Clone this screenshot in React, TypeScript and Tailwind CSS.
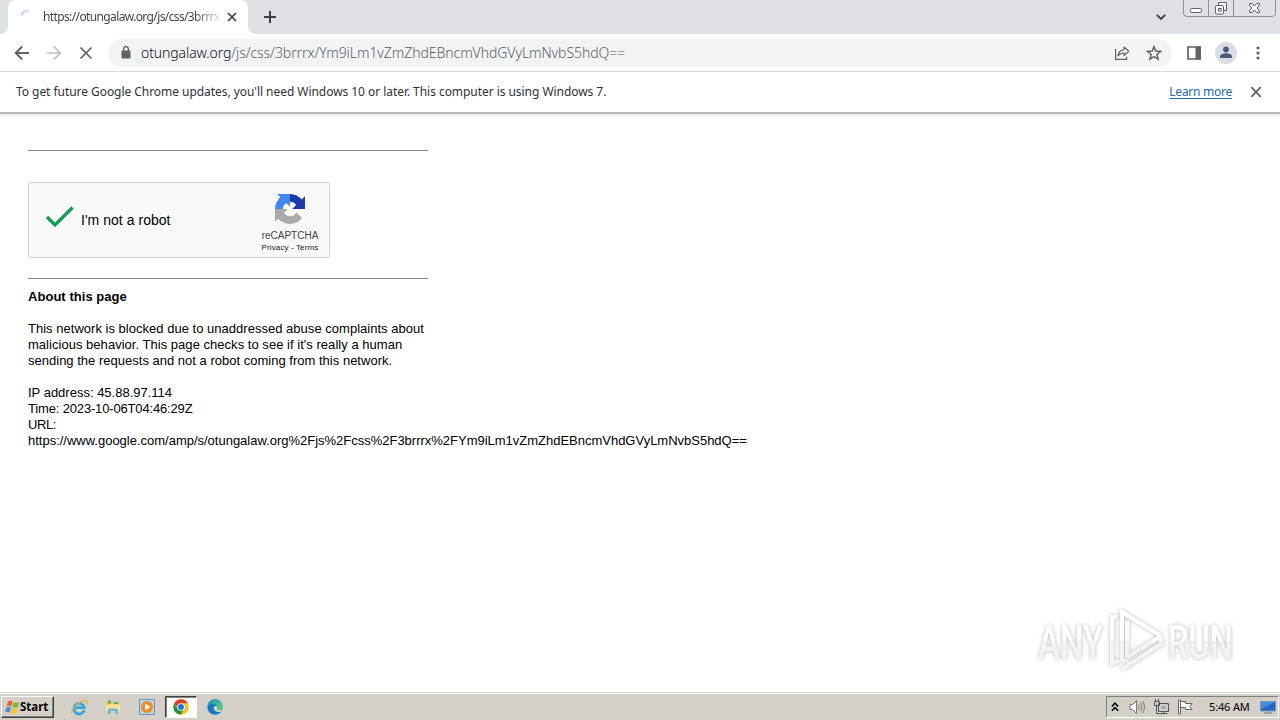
import type { ReactNode } from "react";

const TAHOMA = "font-['Noto_Sans','DejaVu_Sans',sans-serif]";
const ARIAL = "font-['Liberation_Sans',Arial,sans-serif]";

function Stroke({ size, d, className = "", width = 2, box = 24 }: { size: number; d: string; className?: string; width?: number; box?: number }) {
  return (
    <svg width={size} height={size} viewBox={`0 0 ${box} ${box}`} fill="none" stroke="currentColor" strokeWidth={width} className={`block shrink-0 ${className}`}>
      <path d={d} />
    </svg>
  );
}

function TabStrip() {
  return (
    <div className="flex h-[34px] items-start bg-[#dee1e6]">
      <div className="flex h-[34px] w-2 items-end bg-white">
        <div className="h-[34px] w-2 rounded-br-lg bg-[#dee1e6]" />
      </div>
      <div className="flex h-[34px] w-60 items-center rounded-t-lg bg-white pl-3">
        <svg width="16" height="16" viewBox="0 0 16 16" fill="none" className="shrink-0">
          <path d="M1.500 6.500C2.300 3.500 4.700 1.600 8.500 1.800" stroke="#c9d5f8" strokeWidth="2" />
        </svg>
        <div className="ml-[7px] w-[177px] whitespace-nowrap bg-gradient-to-r from-[#3c4043] from-85% to-[#e8e8e8] bg-clip-text text-[12px] leading-4 tracking-[-0.620px] text-transparent">
          https://otungalaw.org/js/css/3brrrx/
        </div>
        <Stroke size={10} box={10} d="M1 1l8 8M9 1L1 9" width={1.700} className="ml-[7px] text-[#3c4043]" />
      </div>
      <div className="h-[34px] w-2 bg-white">
        <div className="h-[34px] w-2 rounded-bl-lg bg-[#dee1e6]" />
      </div>
      <Stroke size={12} box={12} d="M6 0v12M0 6h12" width={2} className="mt-[11px] ml-2 text-[#3c4043]" />
      <Stroke size={10} box={10} d="M0.8 2.8L5 7l4.200-4.200" width={1.9} className="mt-3 ml-auto text-[#3c4043]" />
      <svg width="94" height="18" viewBox="0 0 94 18" fill="none" className="mr-[3px] ml-[17px] block">
        <path d="M.5 0v13q0 3.500 3.500 3.500h85q3.500 0 3.500-3.500V0M25.500 0v16M50.500 0v16" stroke="#8d9198" />
        <rect x="7.500" y="8.500" width="11" height="4" rx="1" fill="#fafafa" stroke="#5c6068" />
        <path d="M35.500 5V2.500h8v8h-2.500" stroke="#5c6068" fill="#fafafa" />
        <rect x="32.500" y="5.500" width="8" height="8.500" rx="1" stroke="#5c6068" fill="#fafafa" />
        <rect x="35.500" y="8.500" width="2.500" height="2.500" stroke="#5c6068" />
        <path d="M66.500 3.500h3l2 2.500 2-2.500h3v2L74 8l2.500 2.500v2h-3l-2-2.500-2 2.500h-3v-2L69 8l-2.500-2.500z" fill="#fafafa" stroke="#5c6068" />
      </svg>
    </div>
  );
}

function Toolbar() {
  return (
    <div className="flex h-[38px] items-center border-b border-[#d5d7da] bg-white pl-[14px] text-[#5f6368]">
      <Stroke size={16} box={16} d="M15 8H2M8.200 1.500L1.700 8l6.500 6.500" width={1.9} />
      <Stroke size={16} box={16} d="M1 8h13M7.800 1.500L14.300 8l-6.500 6.500" width={1.7} className="ml-4 text-[#bbbdc0]" />
      <Stroke size={14} box={14} d="M1.500 1.500l11 11M12.500 1.500l-11 11" width={1.7} className="ml-[17px]" />
      <div className="ml-[15px] flex h-7 w-[1064px] items-center rounded-full bg-[#f1f3f4] pr-[10px] pl-[13px]">
        <svg width="10" height="13" viewBox="0 0 10 13" fill="none" className="block shrink-0">
          <rect x="0.500" y="4.500" width="9" height="8" rx="1" fill="#5f6368" />
          <path d="M2.600 5V3a2.400 2.400 0 014.800 0v2" stroke="#5f6368" strokeWidth="1.400" />
        </svg>
        <div className="ml-[10px] whitespace-nowrap text-[14px] leading-5 font-light text-[#5b5f64]">
          <span className="tracking-[-0.100px] text-[#101114]">otungalaw.org</span>
          <span className="tracking-[-0.070px]">/js/css/3brrrx/Ym9iLm1vZmZhdEBncmVhdGVyLmNvbS5hdQ==</span>
        </div>
        <svg width="16" height="16" viewBox="0 0 16 16" fill="none" stroke="#5f6368" strokeWidth="1.200" className="ml-auto block">
          <path d="M1.600 4v10.400h11v-2.600" />
          <path d="M10 2l4.800 4.300L10 10.500V8c-2.800 0-4.500.8-6 2.800C4.500 7.300 6.500 5 10 4.600z" strokeLinejoin="round" />
        </svg>
        <svg width="16" height="16" viewBox="0 0 24 24" fill="none" stroke="#5f6368" strokeWidth="2.300" className="ml-4 block">
          <path d="M12 2.500l2.700 6.600 7.100.5-5.400 4.600 1.700 7L12 17.400l-6.100 3.800 1.700-7-5.400-4.600 7.100-.5z" />
        </svg>
      </div>
      <svg width="14" height="14" viewBox="0 0 14 14" fill="none" className="ml-[15px] block">
        <path d="M1 1h12v12H1z" stroke="#5f6368" strokeWidth="1.700" />
        <path d="M8.500 0.500H14v13H8.500z" fill="#5f6368" />
      </svg>
      <svg width="22" height="22" viewBox="0 0 22 22" className="ml-[14px] block">
        <circle cx="11" cy="11" r="11" fill="#dadde3" />
        <circle cx="11" cy="7.500" r="2.900" fill="#4b5a7a" />
        <path d="M5 16v-1.500c0-2 3.500-3.200 6-3.200s6 1.200 6 3.200V16z" fill="#4b5a7a" />
      </svg>
      <svg width="4" height="14" viewBox="0 0 4 14" fill="#5f6368" className="ml-[19px] block">
        <circle cx="2" cy="2" r="1.600" />
        <circle cx="2" cy="7" r="1.600" />
        <circle cx="2" cy="12" r="1.600" />
      </svg>
    </div>
  );
}

function InfoBar() {
  return (
    <div className="relative z-10 flex h-[42px] items-center border-b-2 border-[#b9b9b9] bg-white pr-[18px] pl-4 text-[12px] text-[#303236] shadow-[0_2px_2px_#e9e9e9]">
      <span className="whitespace-nowrap tracking-[-0.050px]">To get future Google Chrome updates, you'll need Windows 10 or later. This computer is using Windows 7.</span>
      <span className="ml-auto whitespace-nowrap tracking-[-0.260px] text-[#2467b8] underline underline-offset-2">Learn more</span>
      <Stroke size={12} box={12} d="M1.200 1.200l9.600 9.600M10.800 1.200l-9.600 9.600" width={1.800} className="ml-[18px] text-[#5f6368]" />
    </div>
  );
}

function Captcha() {
  return (
    <div className="mt-[31px] flex h-[76px] w-[302px] rounded-[3px] border border-[#d3d3d3] bg-[#f9f9f9] shadow-[0_0_3px_#ececec]">
      <Stroke size={30} box={30} d="M2 15l8 8L27.500 5.500" width={3.300} className="mt-[19px] ml-4 text-[#0f9d58]" />
      <span className="mt-[27px] ml-[6px] whitespace-nowrap text-[14px] leading-5 tracking-[0.030px] text-black">I'm not a robot</span>
      <div className="mt-[11px] mr-[10px] ml-auto flex w-[58px] flex-col items-center">
        <svg width="30" height="30" viewBox="0 0 64 64" className="block">
          <path d="M64 31.955l-.033-1.370V4.687l-7.160 7.160C50.948 4.674 42.033.093 32.050.093c-10.400 0-19.622 4.960-25.458 12.640l11.736 11.860a15.550 15.550 0 0 1 4.754-5.334c2.050-1.600 4.952-2.906 8.968-2.906.485 0 .86.057 1.135.163 4.976.393 9.288 3.140 11.828 7.124l-8.307 8.307L64 31.953" fill="#1c3aa9" />
          <path d="M31.862.094l-1.370.033H4.594l7.160 7.160C4.580 13.147 0 22.060 0 32.046c0 10.400 4.960 19.622 12.640 25.458L24.500 45.768a15.550 15.550 0 0 1-5.334-4.754c-1.600-2.050-2.906-4.952-2.906-8.968 0-.485.057-.86.163-1.135.393-4.976 3.140-9.288 7.124-11.828l8.307 8.307L31.860.095" fill="#4285f4" />
          <path d="M.001 32.045l.033 1.370v25.898l7.160-7.160c5.860 7.173 14.774 11.754 24.760 11.754 10.400 0 19.622-4.960 25.458-12.640l-11.736-11.860a15.550 15.550 0 0 1-4.754 5.334c-2.050 1.600-4.952 2.906-8.968 2.906-.485 0-.86-.057-1.135-.163-4.976-.393-9.288-3.140-11.828-7.124l8.307-8.307L0 32.045" fill="#ababab" />
        </svg>
        <span className="mt-[5px] whitespace-nowrap text-[10px] leading-[13px] text-[#444]">reCAPTCHA</span>
        <span className="whitespace-nowrap text-[8px] leading-[11px] tracking-[0.120px] text-[#222]">Privacy - Terms</span>
      </div>
    </div>
  );
}

function Line({ track, children }: { track: string; children?: ReactNode }) {
  return <div className={`h-4 whitespace-nowrap ${track}`}>{children}</div>;
}

function Page() {
  return (
    <main className={`relative flex-1 bg-white pt-[36px] pl-7 ${ARIAL}`}>
      <div className="h-px w-[400px] bg-[#868686]" />
      <Captcha />
      <div className="mt-5 h-px w-[400px] bg-[#868686]" />
      <div className="mt-[10px] text-[13px] leading-4 text-black">
        <div className="font-bold tracking-[0.040px]">About this page</div>
        <Line track="" />
        <Line track="tracking-[0.020px]">This network is blocked due to unaddressed abuse complaints about</Line>
        <Line track="tracking-[0.030px]">malicious behavior. This page checks to see if it's really a human</Line>
        <Line track="tracking-[0.010px]">sending the requests and not a robot coming from this network.</Line>
        <Line track="" />
        <Line track="tracking-[0px]">IP address: 45.88.97.114</Line>
        <Line track="tracking-[-0.160px]">Time: 2023-10-06T04:46:29Z</Line>
        <Line track="tracking-[-0.400px]">URL:</Line>
        <Line track="tracking-[-0.010px]">https://www.google.com/amp/s/otungalaw.org%2Fjs%2Fcss%2F3brrrx%2FYm9iLm1vZmZhdEBncmVhdGVyLmNvbS5hdQ==</Line>
      </div>
      <Watermark />
    </main>
  );
}

function Watermark() {
  return (
    <svg width="210" height="80" viewBox="0 0 210 80" className="absolute right-10 bottom-3 overflow-visible drop-shadow-[0_0_2px_#bbbbbb]">
      <defs>
        <linearGradient id="mark" x1="0" y1="10" x2="0" y2="70" gradientUnits="userSpaceOnUse">
          <stop offset="0.500" stopColor="#ffffff" />
          <stop offset="0.520" stopColor="#f3f3f3" />
        </linearGradient>
      </defs>
      <g fill="url(#mark)" className="font-['Roboto',sans-serif] text-[49px] font-medium">
        <text x="8" y="59" textLength="65" lengthAdjust="spacingAndGlyphs">ANY</text>
        <text x="138" y="59" textLength="65" lengthAdjust="spacingAndGlyphs">RUN</text>
      </g>
      <g fill="none" stroke="url(#mark)" strokeWidth="4">
        <path d="M87 17h-5v47l7-4" />
        <path d="M92 61V12l39 24M97 57V21M97 57l33-20" />
        <path d="M92 69l39-25v-7" />
      </g>
    </svg>
  );
}

function ChromeLogo() {
  return (
    <svg width="16" height="16" viewBox="0 0 48 48" className="block">
      <circle cx="24" cy="24" r="23" fill="#fbc116" />
      <path d="M24 24H12.500L4 12.500A23 23 0 0 1 44 12.500H24z" fill="#e33b2e" />
      <path d="M4 12.500A23 23 0 0 0 23 47l10.500-17.500L24 34l-10-5z" fill="#229342" />
      <circle cx="24" cy="24" r="11.500" fill="#fff" />
      <circle cx="24" cy="24" r="8.800" fill="#1a73e8" />
    </svg>
  );
}

function Taskbar() {
  return (
    <footer className={`flex h-7 items-center border-t border-[#d4d0c8] bg-[#d4d0c8] shadow-[inset_0_1px_0_#ffffff] ${TAHOMA}`}>
      <div className="mt-px ml-px flex h-[22px] w-[53px] items-center border border-t-white border-r-[#404040] border-b-[#404040] border-l-white pl-0.5 shadow-[inset_-1px_-1px_0_#808080]">
        <svg width="17" height="17" viewBox="0 0 17 17" className="block shrink-0">
          <path d="M4 2.500Q6.500 1 8.500 2.500L7.300 7.500Q5 6 2.700 7.300z" fill="#ed6135" />
          <path d="M9.500 3Q12 4.400 15.500 2.800L14 8Q11 9.300 8.300 8z" fill="#83b93b" />
          <path d="M2.400 8.300Q5 7 7 8.500L5.700 13.500Q3.500 12.200 1 13.300z" fill="#4b91d8" />
          <path d="M8 9Q10.500 10.300 13.700 9L12.300 14.300Q9.500 15.500 6.700 14z" fill="#fbc12d" />
        </svg>
        <span className="-ml-px text-[11.500px] font-bold text-black">Start</span>
      </div>
      <svg width="18" height="17" viewBox="0 0 18 17" fill="none" className="mt-px ml-[16px] block">
        <path d="M14.200 11.200A5.300 5.300 0 1 1 14.300 8.600H5" stroke="#38a4e0" strokeWidth="2.800" />
        <path d="M2 14.500C-.8 11.500 10 1.500 15.500 1.700c1.800.2 1.400 2.200.6 3.600" stroke="#e3b638" strokeWidth="1.300" />
      </svg>
      <svg width="16" height="16" viewBox="0 0 16 16" className="mt-px ml-[17px] block">
        <path d="M1 2h5l1 1.500h7.500v9H1z" fill="#e8c65c" />
        <path d="M3 1.500h3v3H3zM9 3h4v2H9z" fill="#57ae67" />
        <path d="M1 5.500h14v7H1z" fill="#f7e398" />
        <path d="M3 15v-4q0-1.500 1.500-1.500h7q1.500 0 1.500 1.500v4h-2.500v-3h-5v3z" fill="#6bb4df" />
      </svg>
      <svg width="16" height="16" viewBox="0 0 16 16" className="mt-px ml-[18px] block">
        <path d="M.5.500h15v15H.5z" fill="#b5d4f1" stroke="#6196c9" />
        <circle cx="8" cy="8" r="6" fill="#f58b1f" />
        <path d="M6 4.500L11.500 8 6 11.500z" fill="#fff" />
      </svg>
      <div className="mt-px ml-[10px] flex h-[22px] w-8 items-center justify-center border border-t-[#404040] border-r-white border-b-white border-l-[#404040] bg-white shadow-[inset_1px_1px_0_#808080]">
        <ChromeLogo />
      </div>
      <svg width="16" height="16" viewBox="0 0 16 16" className="mt-px ml-[10px] block">
        <defs>
          <linearGradient id="edge" x1="0" y1="0" x2="1" y2="0.300">
            <stop offset="0" stopColor="#1c8fd8" />
            <stop offset="1" stopColor="#4fd06a" />
          </linearGradient>
        </defs>
        <circle cx="8" cy="8" r="7.700" fill="#1478c8" />
        <path d="M.5 7A7.700 7.700 0 0 1 15.700 8c0 2-1.700 3-3.500 3-2 0-2.800-.8-2-1.700C11 7 8 4.500 5 5 2.500 5.300 1 6.200.5 7z" fill="url(#edge)" />
        <path d="M7 7.500c-1 2.500 1 5.500 4.500 5.500 1.500 0 2.500-.4 3.500-1l1-.5V10c-1 .9-2.500 1.200-4 1-2-.2-2.400-.8-1.800-1.700.5-1-.2-2-1.200-2.300-.9-.2-1.600-.1-2 .5z" fill="#d4d0c8" />
      </svg>
      <div className="mt-px mr-px ml-auto flex h-[22px] w-[173px] items-center border border-t-[#808080] border-r-white border-b-white border-l-[#808080]">
        <Stroke size={10} box={8} d="M1.500 3.500L4 1l2.500 2.500M1.500 7L4 4.500 6.500 7" width={1.300} className="ml-[3px] text-black" />
        <svg width="16" height="16" viewBox="0 0 16 16" fill="none" stroke="#77777a" className="ml-[9px] block">
          <path d="M1 5.500h2.500l4-4v13l-4-4H1z" fill="#f4f4f4" />
          <path d="M9.500 5.500q1.500 2.500 0 5M11.500 3.500q3 4.500 0 9M13.500 2q4 6 0 12" />
        </svg>
        <svg width="16" height="16" viewBox="0 0 16 16" fill="none" stroke="#55565a" className="ml-2 block">
          <path d="M5.500 4.500h10v8h-10z" fill="#aaa" />
          <path d="M7 6h7v5H7z" stroke="#eee" />
          <path d="M1.500 2.500h5v4h-5zM2.500 0v2M5.500 0v2M3.500 6.500v8h11M10.500 12.500v2" />
        </svg>
        <svg width="16" height="16" viewBox="0 0 16 16" fill="none" stroke="#66676a" className="ml-2 block">
          <path d="M1.500 1h2v14h-2zM3.500 2.500h5v2h6.500l-2 3 2 3H8.500v-2h-5z" fill="#f7f7f7" />
        </svg>
        <span className="ml-4 whitespace-nowrap text-[11px] tracking-[-0.150px] text-black">5:46 AM</span>
        <svg width="16" height="14" viewBox="0 0 16 14" className="mr-[2px] ml-auto block shrink-0">
          <path d="M.5 1.500h15v9.500H.5z" fill="#2467bd" stroke="#7799bc" />
          <path d="M1 2h14L1 9z" fill="#438cda" />
          <path d="M4 13h8" stroke="#6b7888" />
        </svg>
      </div>
    </footer>
  );
}

export default function App() {
  return (
    <div className={`flex h-[720px] w-[1280px] flex-col overflow-hidden bg-white ${TAHOMA}`}>
      <TabStrip />
      <Toolbar />
      <InfoBar />
      <Page />
      <Taskbar />
    </div>
  );
}
